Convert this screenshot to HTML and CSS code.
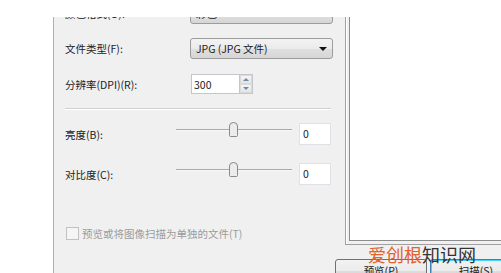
FILE: index.html
```html
<!doctype html>
<html lang="zh-CN">
<head>
    <meta charset="utf-8">
    <title>新扫描</title>
    <link rel="stylesheet" href="styles.css">
</head>
<body>
    <div class="dialog">
        <div class="main">
            <div class="form">
                <div class="row row-first">
                    <label class="lbl">颜色格式(O):</label>
                    <div class="combo"><span>彩色</span><i class="caret"></i></div>
                </div>
                <div class="row">
                    <label class="lbl">文件类型(F):</label>
                    <div class="combo"><span>JPG (JPG 文件)</span><i class="caret"></i></div>
                </div>
                <div class="row row-spin">
                    <label class="lbl lbl-spin">分辨率(DPI)(R):</label>
                    <div class="spin">
                        <span class="spin-value">300</span>
                        <div class="spin-btns">
                            <span class="spin-btn"><i class="up"></i></span>
                            <span class="spin-btn"><i class="down"></i></span>
                        </div>
                    </div>
                </div>
                <div class="sep"></div>
                <div class="row row-slider">
                    <label class="lbl lbl-slider">亮度(B):</label>
                    <svg class="slider" width="116" height="16" viewBox="0 0 116 16">
                        <line x1="0" y1="7.5" x2="116" y2="7.5" stroke="#a9a9a9"/>
                        <line x1="0" y1="8.5" x2="116" y2="8.5" stroke="#f8f8f8"/>
                        <path d="M53.5 4 Q53.5 0.5 57.5 0.5 Q61.5 0.5 61.5 4 V13.5 Q61.5 14.5 60.5 14.5 H54.5 Q53.5 14.5 53.5 13.5 Z" fill="#ececec" stroke="#8a8a8a"/>
                    </svg>
                    <div class="num">0</div>
                </div>
                <div class="row row-slider row-gap">
                    <label class="lbl lbl-slider">对比度(C):</label>
                    <svg class="slider" width="116" height="16" viewBox="0 0 116 16">
                        <line x1="0" y1="7.5" x2="116" y2="7.5" stroke="#a9a9a9"/>
                        <line x1="0" y1="8.5" x2="116" y2="8.5" stroke="#f8f8f8"/>
                        <path d="M53.5 4 Q53.5 0.5 57.5 0.5 Q61.5 0.5 61.5 4 V13.5 Q61.5 14.5 60.5 14.5 H54.5 Q53.5 14.5 53.5 13.5 Z" fill="#ececec" stroke="#8a8a8a"/>
                    </svg>
                    <div class="num">0</div>
                </div>
                <div class="check-row">
                    <span class="checkbox"></span>
                    <span class="check-label">预览或将图像扫描为单独的文件(T)</span>
                </div>
            </div>
            <div class="preview">
                <div class="preview-box"></div>
            </div>
        </div>
        <div class="buttons">
            <button class="btn">预览(P)</button>
            <button class="btn btn-default">扫描(S)</button>
        </div>
        <div class="watermark"><span class="wm-a">爱创根</span>知识网</div>
    </div>
</body>
</html>
```

FILE: styles.css
```css
html, body {
    margin: 0;
    background: #fff;
}

body {
    box-sizing: border-box;
    height: 273px;
    padding: 17px 0 0 53px;
    overflow: hidden;
    font-family: "Noto Sans CJK SC", "DejaVu Sans", sans-serif;
    font-size: 10.5px;
    color: #222;
}

.dialog {
    position: relative;
    height: 256px;
    background: #f0f0f0;
    border-left: 1px solid #9fb4ca;
    overflow: hidden;
}

.main {
    display: flex;
    height: 228px;
}

.form {
    width: 291px;
    flex: none;
    padding-left: 11px;
    box-sizing: border-box;
}

.row {
    display: flex;
    align-items: center;
    height: 21px;
    margin-top: 14px;
}

.row-first {
    margin-top: -14px;
}

.lbl {
    width: 125px;
    flex: none;
    white-space: nowrap;
}

.lbl-spin {
    width: 126px;
}

.lbl-slider {
    width: 111px;
}

.combo {
    display: flex;
    align-items: center;
    width: 143px;
    height: 21px;
    box-sizing: border-box;
    padding-left: 5px;
    border: 1px solid #9c9c9c;
    border-radius: 3px;
    background: linear-gradient(#f3f3f3, #ebebeb 50%, #dfdfdf 52%, #d6d6d6);
    white-space: nowrap;
}

.caret {
    margin-left: auto;
    margin-right: 5px;
    border-left: 4px solid transparent;
    border-right: 4px solid transparent;
    border-top: 4px solid #111;
}

.row-spin {
    height: 20px;
    margin-top: 15px;
}

.spin {
    display: flex;
    height: 20px;
}

.spin-value {
    width: 48px;
    box-sizing: border-box;
    padding: 1px 0 0 2px;
    background: #fff;
    border: 1px solid #c4c6cc;
    border-right: 0;
    line-height: 17px;
}

.spin-btns {
    display: flex;
    flex-direction: column;
    width: 12px;
    border: 1px solid #c4c6cc;
    background: #fff;
}

.spin-btn {
    flex: 1;
    display: flex;
    align-items: center;
    justify-content: center;
    background: linear-gradient(#f6f6f6, #e4e4e4);
    border: 1px solid #dadada;
}

.up {
    border-left: 3px solid transparent;
    border-right: 3px solid transparent;
    border-bottom: 3px solid #6d8bb0;
}

.down {
    border-left: 3px solid transparent;
    border-right: 3px solid transparent;
    border-top: 3px solid #6d8bb0;
}

.sep {
    width: 266px;
    margin-top: 14px;
    border-top: 1px solid #d0d0d0;
    border-bottom: 1px solid #fff;
}

.row-slider {
    height: 22px;
    margin-top: 13px;
}

.row-gap {
    margin-top: 18px;
}

.slider {
    align-self: flex-start;
    margin-top: -1px;
    flex: none;
}

.num {
    width: 32px;
    height: 22px;
    box-sizing: border-box;
    margin-left: 7px;
    padding: 2px 0 0 3px;
    background: #fff;
    border: 1px solid #dfe1e6;
    line-height: 16px;
}

.check-row {
    display: flex;
    align-items: center;
    height: 13px;
    margin-top: 42px;
    color: #9c9c9c;
}

.checkbox {
    width: 13px;
    height: 13px;
    box-sizing: border-box;
    margin-left: 1px;
    margin-right: 3px;
    border: 1px solid #c2c2c2;
    background: #f5f5f5;
}

.preview {
    flex: 1;
    padding: 0 0 3px 3px;
    border-left: 1px solid #a0a0a0;
    border-bottom: 1px solid #a0a0a0;
    box-shadow: inset 1px 0 #fff;
}

.preview-box {
    height: 100%;
    box-sizing: border-box;
    background: #fff;
    border-left: 1px solid #8d8d8d;
    border-bottom: 1px solid #8d8d8d;
}

.buttons {
    display: flex;
    gap: 3px;
    margin-top: 14px;
    padding-left: 281px;
}

.btn {
    flex: none;
    width: 92px;
    height: 23px;
    padding: 0;
    font: inherit;
    color: #222;
    border: 1px solid #707070;
    border-radius: 3px;
    background: linear-gradient(#f2f2f2, #ebebeb 50%, #dddddd 51%, #cfcfcf);
}

.btn-default {
    border-color: #3c7fb1;
    box-shadow: inset 0 0 0 1px #48d4fc;
}

.watermark {
    position: absolute;
    left: 314px;
    top: 228px;
    font-size: 18px;
    line-height: 18px;
    color: #333;
    white-space: nowrap;
}

.wm-a {
    color: #e2632b;
}
```
